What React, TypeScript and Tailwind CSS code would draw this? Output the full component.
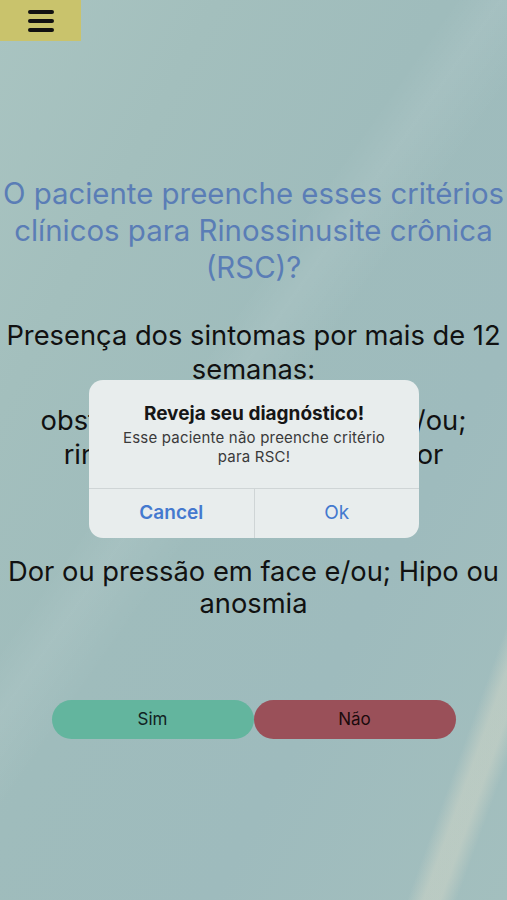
import React from "react";

export default function App() {
  return (
    <div
      className="relative min-h-[900px] w-full overflow-hidden bg-[linear-gradient(118deg,#a9c4c1_0%,#a3bfbd_22%,#9fbcbc_45%,#9ebbbd_70%,#a3bfbe_100%)]"
      style={{ fontFamily: 'Inter, "Liberation Sans", Arial, sans-serif' }}
    >
      {/* faint diagonal streaks of the wallpaper */}
      <div className="pointer-events-none absolute inset-0 bg-[linear-gradient(110deg,transparent_0%,transparent_88%,rgba(232,226,205,0.35)_90%,rgba(232,226,205,0.35)_92%,transparent_94%,transparent_100%)]" />
      <div className="pointer-events-none absolute inset-0 bg-[linear-gradient(125deg,transparent_0%,transparent_40%,rgba(255,255,255,0.07)_44%,transparent_50%,transparent_100%)]" />

      <div className="relative flex flex-col">
        {/* Menu */}
        <div className="flex h-[41px] w-[81px] flex-col items-center justify-center gap-[5px] bg-[#c9c36c]">
          <span className="block h-[4px] w-[26px] rounded-full bg-[#111]" />
          <span className="block h-[4px] w-[26px] rounded-full bg-[#111]" />
          <span className="block h-[4px] w-[26px] rounded-full bg-[#111]" />
        </div>

        {/* Pergunta */}
        <h1 className="mt-[134px] text-center text-[29.4px] leading-[37px] font-normal text-[#5a7db6]">
          O paciente preenche esses critérios clínicos para Rinossinusite crônica (RSC)?
        </h1>

        {/* Critérios */}
        <div className="mt-[33px] text-center text-[27.3px] leading-[34px] text-[#111]">
          <p>Presença dos sintomas por mais de 12 semanas:</p>
          <p className="mt-[17px] px-8">obstrução/congestão nasal e/ou; rinorreia anterior ou posterior</p>
          <p className="mt-[84px] leading-[32px]">Dor ou pressão em face e/ou; Hipo ou anosmia</p>
        </div>

        {/* Respostas */}
        <div className="mt-[80px] flex justify-center">
          <button className="h-[39px] w-[202px] rounded-full bg-[#63b59e] text-[17px] text-[#122]">
            Sim
          </button>
          <button className="h-[39px] w-[202px] rounded-full bg-[#9a5059] text-[17px] text-[#1a0a0c]">
            Não
          </button>
        </div>
      </div>

      {/* Alerta */}
      <div className="absolute left-[89px] top-[380px] w-[330px] overflow-hidden rounded-[14px] bg-[#e8eded]">
        <div className="px-4 pt-[22px] pb-[22px] text-center">
          <div className="text-[19px] leading-[24px] font-bold text-[#161616]">Reveja seu diagnóstico!</div>
          <div className="mt-[2px] text-[15px] leading-[19px] tracking-[0.2px] text-[#3a3a3a]">
            Esse paciente não preenche critério
            <br />
            para RSC!
          </div>
        </div>
        <div className="flex h-[50px] border-t border-[#cfd5d6]">
          <button className="flex-1 text-[19px] font-semibold text-[#4479cf]">Cancel</button>
          <div className="w-px bg-[#cfd5d6]" />
          <button className="flex-1 text-[19px] text-[#4479cf]">Ok</button>
        </div>
      </div>
    </div>
  );
}
